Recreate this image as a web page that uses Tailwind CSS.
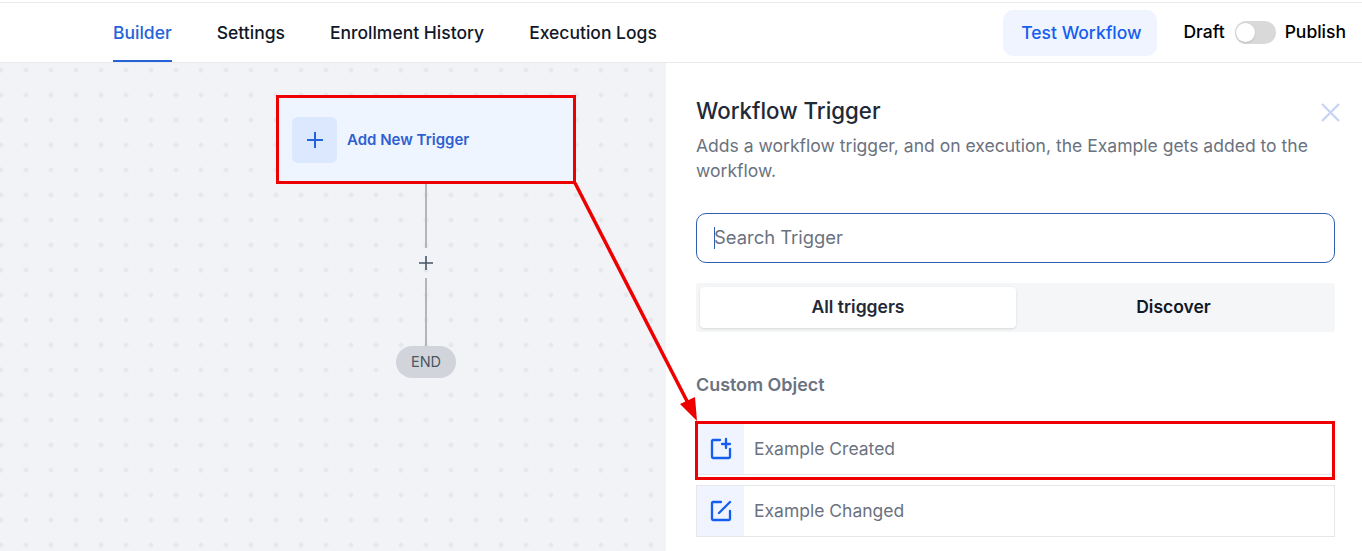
<!DOCTYPE html>
<html lang="en">
<head>
  <meta charset="UTF-8" />
  <meta name="viewport" content="width=device-width, initial-scale=1.0" />
  <title>Workflow Builder</title>
  <script src="https://cdn.jsdelivr.net/npm/@tailwindcss/browser@4"></script>
</head>
<body class="relative h-[551px] overflow-hidden bg-white font-['Inter',sans-serif] text-[18px]">
  <!-- top bar -->
  <header class="mt-[2px] flex h-[61px] items-center justify-between border-y border-[#e9eaec] bg-white pr-4 pl-[113px]">
    <nav class="flex h-full gap-[45px] text-[17.5px] font-medium text-[#101828]">
      <a class="flex h-full items-center border-b-2 border-[#2563d8] pt-[3px] text-[#2563d8]">Builder</a>
      <a class="flex h-full items-center pt-[2px]">Settings</a>
      <a class="flex h-full items-center pt-[2px]">Enrollment History</a>
      <a class="flex h-full items-center pt-[2px]">Execution Logs</a>
    </nav>
    <div class="flex items-center text-[17.5px] font-medium text-black">
      <button class="mr-[26px] h-[46px] w-[154px] rounded-[10px] bg-[#eff4ff] pt-[1px] pl-[2px] text-[#155eef]">Test Workflow</button>
      <span>Draft</span>
      <span class="relative mr-[9px] ml-[10px] h-[23px] w-[41px] rounded-full bg-[#d9d9d9]">
        <span class="absolute top-[2px] left-[1px] h-[19px] w-[19px] rounded-full bg-white shadow"></span>
      </span>
      <span>Publish</span>
    </div>
  </header>

  <div class="flex h-[488px]">
    <!-- canvas -->
    <main class="flex h-full w-[666px] shrink-0 flex-col bg-[#f2f3f7] bg-[radial-gradient(circle,#e6e7ea_2px,transparent_2.5px)] bg-[length:25px_25px] bg-[position:-11.5px_-5.5px] pt-[32px] pl-[276px]">
      <div class="flex h-[89px] w-[300px] items-center gap-[10px] border-[3px] border-[#ee0000] bg-[#eef5ff] pl-[13px]">
        <span class="flex h-[46px] w-[45px] items-center justify-center rounded-[6px] bg-[#dbe8fd]">
          <svg width="20" height="20" viewBox="0 0 20 20" fill="none" stroke="#2563d8" stroke-width="2"><path d="M10 2v16M2 10h16" /></svg>
        </span>
        <span class="pt-[2px] text-[15px] font-semibold text-[#2f5fd0]">Add New Trigger</span>
      </div>
      <div class="flex w-[300px] flex-col items-center">
        <div class="h-[64px] w-[2px] bg-[#b4b5bb]"></div>
        <svg class="my-[7px]" width="16" height="16" viewBox="0 0 16 16" fill="none" stroke="#475467" stroke-width="1.6"><path d="M8 1v14M1 8h14" /></svg>
        <div class="h-[68px] w-[2px] bg-[#b4b5bb]"></div>
        <div class="flex h-[32px] w-[60px] items-center justify-center rounded-full bg-[#d1d5db] text-[14.5px] font-normal text-[#4b5563]">END</div>
      </div>
    </main>

    <!-- trigger panel -->
    <aside class="w-[696px] pt-[33px] pr-[27px] pl-[30px]">
      <div class="flex items-start justify-between">
        <h2 class="text-[22.25px] leading-[30px] font-medium text-[#1f2937]">Workflow Trigger</h2>
        <svg class="mt-[5px] -mr-[7px]" width="22" height="22" viewBox="0 0 22 22" fill="none" stroke="#c7d4f5" stroke-width="2.4"><path d="M2 3l17 17M19 3L2 20" /></svg>
      </div>
      <p class="mt-[7px] w-[630px] text-[17.55px] leading-[25px] text-[#6b7280]">Adds a workflow trigger, and on execution, the Example gets added to the workflow.</p>

      <div class="mt-[30px] flex h-[50px] items-center rounded-[10px] border border-[#2f5fb0] pl-[17px] text-[18.4px] text-[#6b7280]">
        <span class="mr-[-1px] h-[22px] w-px bg-[#2f5fb0]"></span>
        <span>Search Trigger</span>
      </div>

      <div class="mt-[20px] flex h-[49px] rounded-[3px] bg-[#f5f6f7] p-[4px] text-[17.5px] font-semibold text-[#1f2937]">
        <button class="w-[316px] rounded-[4px] bg-white shadow-sm">All triggers</button>
        <button class="flex-1 text-[#111827]">Discover</button>
      </div>

      <h3 class="mt-[41px] text-[17.9px] leading-[24px] font-semibold text-[#6b7280]">Custom Object</h3>

      <div class="relative mt-[26px] flex h-[52px] border border-[#e6e7ea] text-[17.5px] text-[#6b7280]">
        <span class="flex w-[47px] items-center justify-center bg-[#eff4ff]">
          <svg width="24" height="24" viewBox="0 0 24 24" fill="none" stroke="#155eef" stroke-width="2.3" stroke-linecap="round" stroke-linejoin="round"><path d="M11 3H4a1 1 0 0 0-1 1v16a1 1 0 0 0 1 1h16a1 1 0 0 0 1-1v-8" /><path d="M17 2v9M13 7h8" /></svg>
        </span>
        <span class="flex items-center pl-[10px]">Example Created</span>
        <span class="absolute -top-[3px] -right-px -bottom-[6px] -left-[2px] border-[3px] border-[#ee0000]"></span>
      </div>

      <div class="mt-[10px] flex h-[52px] border border-[#e6e7ea] text-[17.5px] text-[#6b7280]">
        <span class="flex w-[47px] items-center justify-center bg-[#eff4ff]">
          <svg width="24" height="24" viewBox="0 0 24 24" fill="none" stroke="#155eef" stroke-width="2.3" stroke-linecap="round" stroke-linejoin="round"><path d="M12 3H4a1 1 0 0 0-1 1v16a1 1 0 0 0 1 1h16a1 1 0 0 0 1-1v-8" /><path d="M21 3L10 14" /></svg>
        </span>
        <span class="flex items-center pl-[10px]">Example Changed</span>
      </div>
    </aside>
  </div>

  <!-- red annotation arrow -->
  <svg class="absolute top-0 left-0" width="1362" height="551" fill="none">
    <path d="M575 183L689 405" stroke="#ee0000" stroke-width="3.5" />
    <path d="M697 421L680 404L695 397Z" fill="#ee0000" />
  </svg>
</body>
</html>
